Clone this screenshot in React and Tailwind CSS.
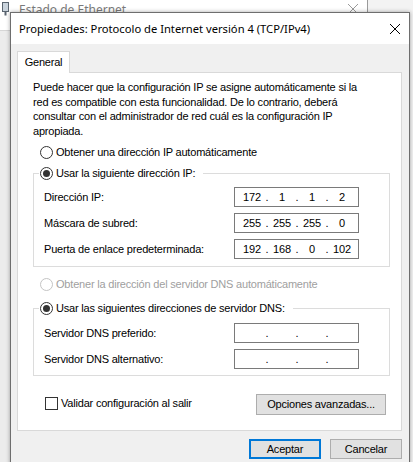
import { Fragment } from "react";

const ipRows = [
  { label: "Dirección IP:", parts: ["172", "1", "1", "2"] },
  { label: "Máscara de subred:", parts: ["255", "255", "255", "0"] },
  { label: "Puerta de enlace predeterminada:", parts: ["192", "168", "0", "102"] },
];

const dnsRows = [
  { label: "Servidor DNS preferido:", parts: ["", "", "", ""] },
  { label: "Servidor DNS alternativo:", parts: ["", "", "", ""] },
];

const descripcion = [
  "Puede hacer que la configuración IP se asigne automáticamente si la",
  "red es compatible con esta funcionalidad. De lo contrario, deberá",
  "consultar con el administrador de red cuál es la configuración IP",
  "apropiada.",
];

function Radio({ checked, disabled }) {
  return (
    <span
      className={`w-[13px] h-[13px] shrink-0 rounded-full border bg-white flex items-center justify-center ${
        disabled ? "border-[#c4c4c4]" : "border-[#333333]"
      }`}
    >
      {checked && <span className="w-[7px] h-[7px] rounded-full bg-[#333333]" />}
    </span>
  );
}

function IpBox({ parts }) {
  return (
    <div className="w-[125px] h-[20px] mr-[25px] border border-[#7a7a7a] bg-white flex items-center pl-[4px]">
      {parts.map((p, i) => (
        <Fragment key={i}>
          <span className="w-[26px] text-center">{p}</span>
          {i < 3 && <span className="w-[4px] text-center">.</span>}
        </Fragment>
      ))}
    </div>
  );
}

function Grupo({ titulo, filas, pt }) {
  return (
    <fieldset className="border border-[#dcdcdc] px-[5px] min-w-0">
      <legend className="pl-[1px] pr-[8px]">
        <span className="flex items-center h-[15px] gap-[3px]">
          <Radio checked />
          <span>{titulo}</span>
        </span>
      </legend>
      <div className={`pl-[5px] flex flex-col gap-[6px] ${pt}`}>
        {filas.map((f) => (
          <div key={f.label} className="h-[20px] flex items-center justify-between">
            <span>{f.label}</span>
            <IpBox parts={f.parts} />
          </div>
        ))}
      </div>
    </fieldset>
  );
}

export default function App() {
  return (
    <div className="relative w-[413px] h-[462px] overflow-hidden bg-[#f3f3f3] font-['Liberation_Sans',Arial,sans-serif] text-[11px] tracking-[-0.2px] leading-[15px] text-black">
      {/* ventana de fondo: Estado de Ethernet */}
      <div className="absolute left-0 top-0 w-[368px] h-[462px] bg-[#ececec] border-r border-[#9a9a9a]">
        <div className="h-[31px] bg-white border-b border-[#d6d6d6] flex items-start">
          <svg width="7" height="14" viewBox="0 0 7 14" className="ml-[2px] mt-[2px]">
            <rect x="0.5" y="0.5" width="6" height="9" fill="#c9d3dc" stroke="#5a6570" />
            <rect x="2.5" y="9.5" width="2" height="4" fill="#5a6570" />
          </svg>
          <span className="ml-[10px] pt-[4px] text-[12px] leading-[12px] tracking-normal text-[#7a7a7a] font-['Noto_Sans',sans-serif]">
            Estado de Ethernet
          </span>
          <svg width="10" height="10" viewBox="0 0 10 10" className="ml-auto mr-[9px] mt-[4px]">
            <path d="M0 0 L10 10 M10 0 L0 10" stroke="#9a9a9a" strokeWidth="1" />
          </svg>
        </div>
      </div>

      {/* cuadro de diálogo */}
      <div className="absolute left-[10px] top-[12px] w-[400px] h-[460px] border border-[#6e6e6e] bg-[#f0f0f0] flex flex-col shadow-[0_0_4px_rgba(0,0,0,0.35)]">
        <div className="h-[31px] shrink-0 bg-white flex items-center justify-between pl-[8px] pr-[9px]">
          <span className="font-['Noto_Sans',sans-serif] text-[11.2px] tracking-normal">
            Propiedades: Protocolo de Internet versión 4 (TCP/IPv4)
          </span>
          <svg width="10" height="10" viewBox="0 0 10 10">
            <path d="M0 0 L10 10 M10 0 L0 10" stroke="#000" strokeWidth="1" />
          </svg>
        </div>

        <div className="flex-1 pl-[6px] pr-[7px] pt-[7px]">
          {/* pestaña */}
          <div className="flex">
            <div className="relative z-10 -mb-px w-[53px] h-[22px] bg-white border-t border-l border-r border-[#d9d9d9] flex items-center justify-center">
              General
            </div>
          </div>

          {/* panel */}
          <div className="border border-[#d9d9d9] bg-white pl-[15px] pr-[11px] pt-[7px] pb-[15px]">
            <div className="leading-[14.5px] whitespace-nowrap">
              {descripcion.map((l) => (
                <div key={l}>{l}</div>
              ))}
            </div>

            <div className="mt-[7px] h-[15px] pl-[7px] flex items-center gap-[3px]">
              <Radio />
              <span>Obtener una dirección IP automáticamente</span>
            </div>

            <div className="mt-[6px]">
              <Grupo titulo="Usar la siguiente dirección IP:" filas={ipRows} pt="pt-[6px] pb-[7px]" />
            </div>

            <div className="mt-[10px] h-[15px] pl-[7px] flex items-center gap-[3px] text-[#a0a0a0]">
              <Radio disabled />
              <span>Obtener la dirección del servidor DNS automáticamente</span>
            </div>

            <div className="mt-[9px]">
              <Grupo
                titulo="Usar las siguientes direcciones de servidor DNS:"
                filas={dnsRows}
                pt="pt-[7px] pb-[6px]"
              />
            </div>

            <div className="mt-[18px] h-[21px] flex items-center justify-between">
              <div className="ml-[12px] mb-[2px] flex items-center gap-[3px]">
                <span className="w-[13px] h-[13px] border border-[#333333] bg-white" />
                <span>Validar configuración al salir</span>
              </div>
              <button className="mr-[4px] w-[130px] h-[21px] bg-[#e1e1e1] border border-[#adadad]">
                Opciones avanzadas...
              </button>
            </div>
          </div>

          {/* botones */}
          <div className="mt-[8px] flex justify-end gap-[9px]">
            <button className="w-[72px] h-[20px] bg-[#e1e1e1] border-2 border-[#0078d7]">Aceptar</button>
            <button className="w-[72px] h-[20px] bg-[#e1e1e1] border border-[#adadad]">Cancelar</button>
          </div>
        </div>
      </div>
    </div>
  );
}
